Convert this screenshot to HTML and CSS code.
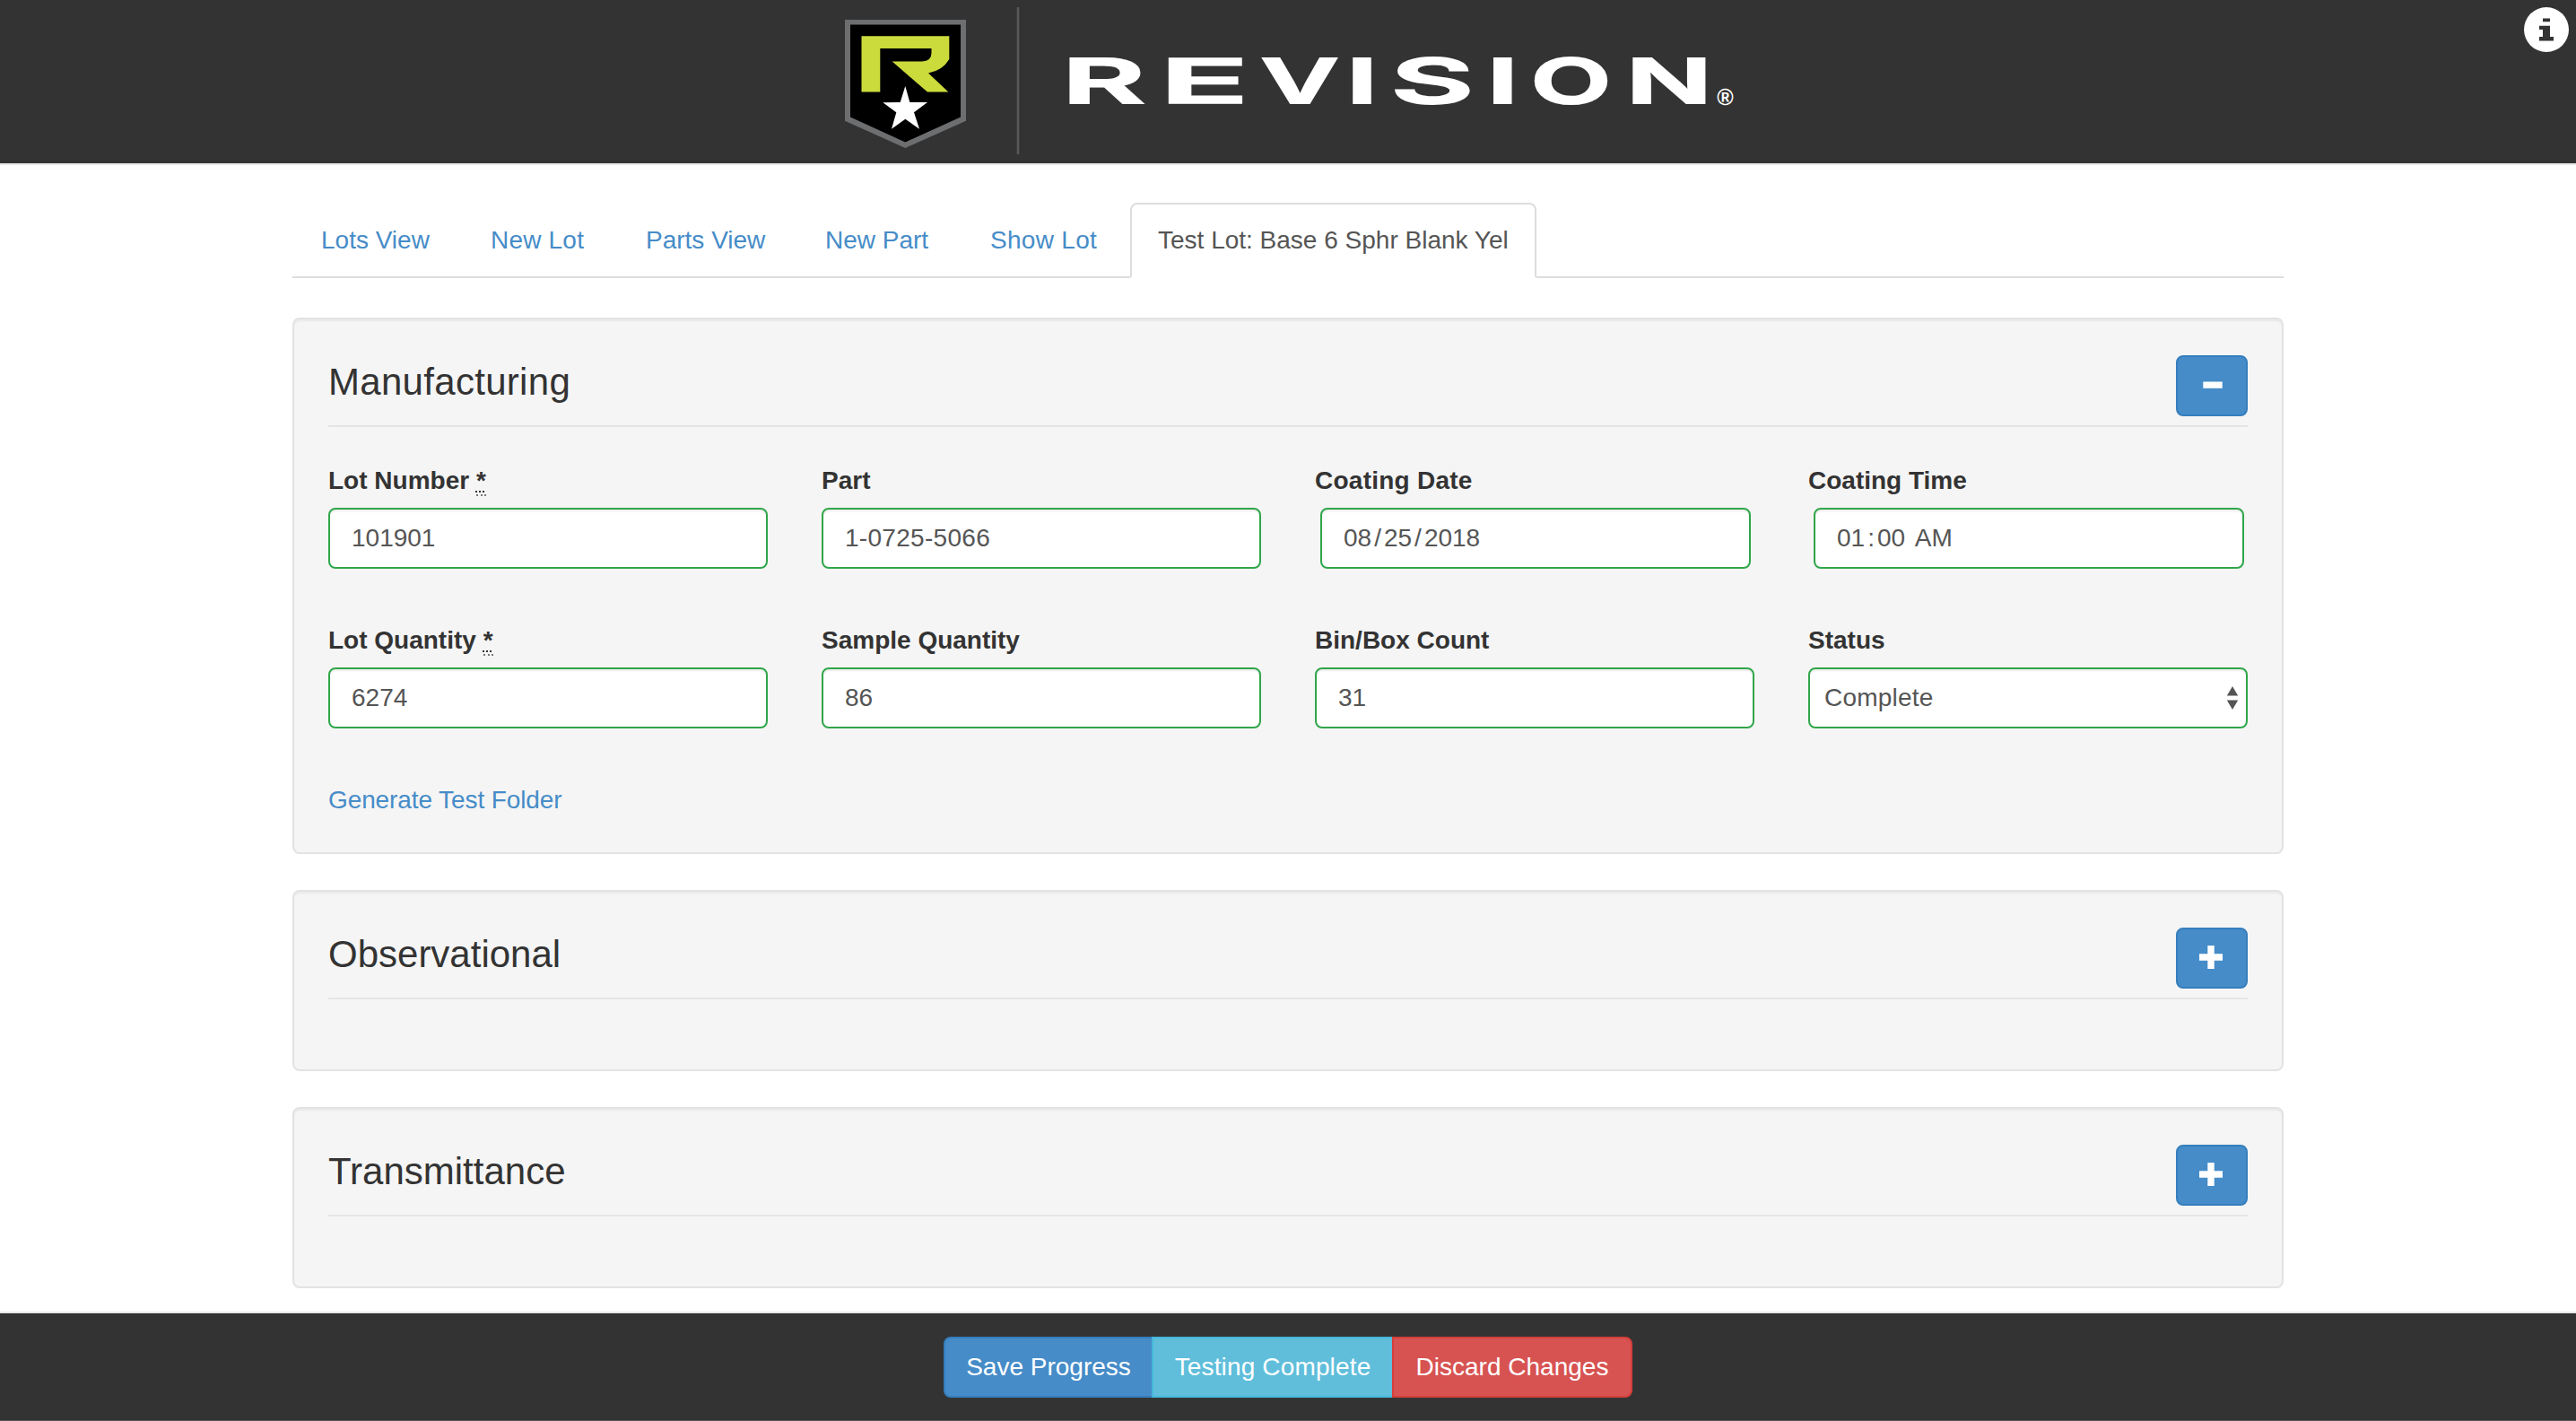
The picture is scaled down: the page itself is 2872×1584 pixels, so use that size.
FILE: index.html
```html
<!DOCTYPE html>
<html lang="en">
<head>
<meta charset="utf-8">
<title>Revision Lots</title>
<link rel="stylesheet" href="styles.css">
</head>
<body>
<header class="topbar">
  <svg class="logo" viewBox="0 0 1000 182" role="img">
    <path d="M6 22H141V134.7L73.3 165L6 134.7Z" fill="#6d6e70"/>
    <path d="M12 27.5H135V130.5L73.3 158.5L12 130.5Z" fill="#000"/>
    <path d="M24.5 40.3H122.3V66Q115 78.5 99 81.5L121.3 102.5H98L58.7 68.5H92Q102.5 68 102.5 59V54H45.3V102.5H24.5Z" fill="#ccdb3c"/>
    <path d="M73.3 96L78.3 114H98L83 125.3L89 143.7L73.3 132.7L58 143.7L63.3 125.3L48.3 114.3L67.7 114Z" fill="#fff"/>
    <rect x="197.7" y="8" width="2.6" height="164" fill="#58585a"/>
    <g class="wordmark">
      <text transform="translate(248 115.3) scale(2.05 1)">R</text>
      <text transform="translate(356.7 115.3) scale(2.38 1)">E</text>
      <text transform="translate(470 115.3) scale(1.71 1)">V</text>
      <text transform="translate(564.8 115.3) scale(1.85 1)">I</text>
      <text transform="translate(614.5 115.3) scale(2.06 1)">S</text>
      <text transform="translate(721.5 115.3) scale(1.85 1)">I</text>
      <text transform="translate(770.8 115.3) scale(1.68 1)">O</text>
      <text transform="translate(877 115.3) scale(1.82 1)">N</text>
    </g>
    <text class="reg" x="978.3" y="117">®</text>
  </svg>
  <svg class="info" viewBox="0 0 50 50"><circle cx="25" cy="25" r="25" fill="#fff"/><path d="M21 12.5h8v3.7h-8zM17 20.7h12V33h4v4.5H17V33h4v-8h-4z" fill="#333"/></svg>
</header>
<main class="container">
  <nav class="tabs">
    <a class="tab t1">Lots View</a><a class="tab t2">New Lot</a><a class="tab t3">Parts View</a><a class="tab t4">New Part</a><a class="tab t5">Show Lot</a><a class="tab active">Test Lot: Base 6 Sphr Blank Yel</a>
  </nav>
  <section class="well">
    <div class="legend"><h2 class="wide">Manufacturing</h2><button class="toggle"><svg viewBox="0 0 80 68"><path d="M30.3 29.5h21.4v7.3H30.3z" fill="#fff"/></svg></button></div>
    <div class="grid">
      <div class="field"><label>Lot Number <abbr>*</abbr></label><div class="input">101901</div></div>
      <div class="field"><label>Part</label><div class="input part">1-0725-5066</div></div>
      <div class="field"><label class="spaced">Coating Date</label><div class="input timed"><span>08</span><span>/</span><span>25</span><span>/</span><span>2018</span></div></div>
      <div class="field"><label>Coating Time</label><div class="input timed"><span>01</span><span>:</span><span>00</span><span>&nbsp;AM</span></div></div>
      <div class="field"><label>Lot Quantity <abbr>*</abbr></label><div class="input">6274</div></div>
      <div class="field"><label>Sample Quantity</label><div class="input">86</div></div>
      <div class="field"><label>Bin/Box Count</label><div class="input">31</div></div>
      <div class="field"><label>Status</label><div class="input select"><span>Complete</span><svg class="arrows" viewBox="0 0 14 26"><path d="M7 0L13.2 10.5H.8zM7 26L.8 15.5H13.2z" fill="#555"/></svg></div></div>
    </div>
    <a class="link">Generate Test Folder</a>
  </section>
  <section class="well">
    <div class="legend"><h2>Observational</h2><button class="toggle"><svg viewBox="0 0 80 68"><path d="M35.3 20h7.4v9.3H52v7.4h-9.3V46h-7.4v-9.3H26v-7.4h9.3z" fill="#fff"/></svg></button></div>
  </section>
  <section class="well">
    <div class="legend"><h2>Transmittance</h2><button class="toggle"><svg viewBox="0 0 80 68"><path d="M35.3 20h7.4v9.3H52v7.4h-9.3V46h-7.4v-9.3H26v-7.4h9.3z" fill="#fff"/></svg></button></div>
  </section>
</main>
<footer class="bottombar">
  <div class="group"><button class="btn save">Save Progress</button><button class="btn complete">Testing Complete</button><button class="btn discard">Discard Changes</button></div>
</footer>
</body>
</html>
```
FILE: styles.css
```css
* { box-sizing: border-box; }
body { margin: 0; height: 1584px; display: flex; flex-direction: column; background: #fff; color: #333; font: 28px/40px "Liberation Sans", Arial, sans-serif; overflow: hidden; }
.topbar { position: relative; height: 184px; background: #333; border-bottom: 2px solid #e7e7e7; display: flex; justify-content: center; flex: none; }
.logo { width: 1000px; height: 182px; }
.wordmark text { font: 600 69.3px Inter, sans-serif; fill: #fff; stroke: #fff; stroke-width: 3px; vector-effect: non-scaling-stroke; }
.reg { font: 700 25px "Liberation Sans", sans-serif; fill: #fff; }
.info { position: absolute; top: 8px; right: 8px; width: 50px; height: 50px; }
.container { width: 2220px; margin: 42px auto 0; flex: 1; }
.tabs { display: flex; height: 84px; border-bottom: 2px solid #ddd; gap: 4px; margin-bottom: 44px; }
.tab { height: 84px; padding: 20px 30px; border: 2px solid transparent; color: #468cc8; white-space: nowrap; }
.t1 { width: 185px; }
.t2 { width: 169px; letter-spacing: .2px; }
.t3 { width: 196px; }
.t4 { width: 180px; }
.t5 { width: 184px; letter-spacing: .3px; }
.tab.active { color: #555; background: #fff; border-color: #ddd #ddd #fff; border-radius: 8px 8px 0 0; width: 453px; padding-left: 29px; }
.well { background: #f5f5f5; border: 2px solid #e3e3e3; border-radius: 8px; padding: 38px; margin-bottom: 40px; box-shadow: inset 0 2px 2px rgba(0,0,0,.05); min-height: 202px; }
.well:last-child { margin-bottom: 0; }
.legend { display: flex; justify-content: space-between; height: 82px; padding-top: 2px; border-bottom: 2px solid #e5e5e5; }
h2 { margin: 0; font: 400 42px/60px "Liberation Sans", Arial, sans-serif; }
.wide { letter-spacing: .3px; }
.toggle { width: 80px; height: 68px; padding: 0; background: #468cc8; border: 2px solid #357ebd; border-radius: 8px; }
.toggle svg { display: block; width: 80px; height: 68px; margin: -2px; }
.grid { display: grid; grid-template-columns: repeat(4, 490px); column-gap: 60px; row-gap: 60px; padding-top: 40px; }
label { display: block; height: 50px; font-weight: 700; }
.spaced { letter-spacing: .25px; }
abbr { text-decoration: underline dotted 2px; text-underline-offset: 2px; text-decoration-skip-ink: none; border-bottom: 2px dotted #777; }
.input { height: 68px; padding: 12px 24px; background: #fff; border: 2px solid #30a64a; border-radius: 8px; color: #555; box-shadow: inset 0 2px 2px rgba(0,0,0,.075); }
.part { letter-spacing: .3px; }
.timed { margin: 0 4px 0 6px; display: flex; gap: 3px; }
.select { display: flex; justify-content: space-between; align-items: center; padding: 0 7.7px 0 16px; letter-spacing: .2px; }
.arrows { width: 14px; height: 26px; }
.link { display: block; margin-top: 60px; color: #468cc8; letter-spacing: -.1px; }
.bottombar { flex: none; height: 122px; background: #333; border-top: 2px solid #e7e7e7; padding-top: 26px; display: flex; justify-content: center; border-bottom: 1px solid #555; }
.group { display: flex; width: 768px; height: 68px; }
.btn { font: inherit; color: #fff; border: 2px solid; padding: 0; height: 68px; }
.save { width: 232px; background: #468cc8; border-color: #357ebd; border-right: 0; border-radius: 8px 0 0 8px; }
.complete { width: 268px; background: #60bedb; border-color: #46b8da; border-right: 0; letter-spacing: .15px; }
.discard { width: 268px; background: #d75352; border-color: #d43f3a; border-radius: 0 8px 8px 0; }
```
